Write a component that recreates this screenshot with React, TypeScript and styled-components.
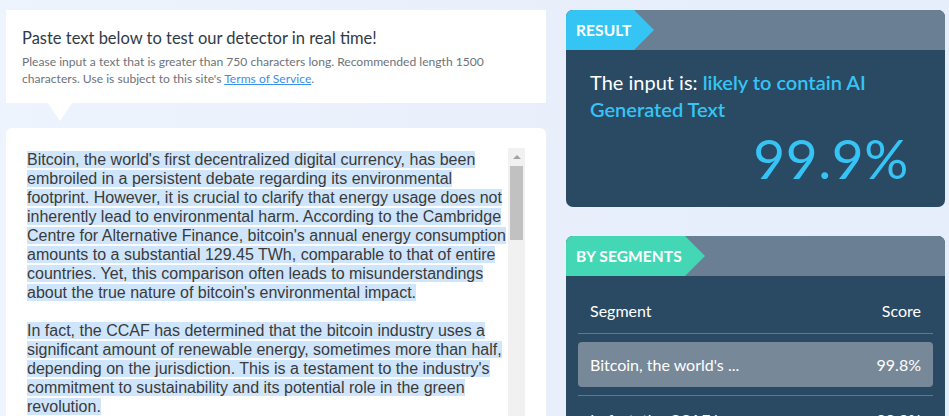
import React from "react";
import styled, { createGlobalStyle } from "styled-components";

const Global = createGlobalStyle`
  html, body { margin: 0; padding: 0; }
  body {
    width: 949px;
    height: 416px;
    overflow: hidden;
    background: linear-gradient(90deg, #eef4fd 0%, #e8effb 60%, #e6eefb 100%);
    font-family: Lato, "Noto Sans", sans-serif;
  }
`;

const Page = styled.div`
  display: grid;
  grid-template-columns: 540px 379px;
  column-gap: 20px;
  padding: 10px 4px 0 6px;
`;

const LeftCol = styled.div`
  display: flex;
  flex-direction: column;
`;

const InfoCard = styled.div`
  position: relative;
  background: #fff;
  height: 93px;
  box-sizing: border-box;
  padding: 18px 50px 0 16px;
  &::after {
    content: "";
    position: absolute;
    left: 42px;
    top: 93px;
    border-left: 12.5px solid transparent;
    border-right: 12.5px solid transparent;
    border-top: 18px solid #fff;
  }
`;

const Title = styled.h1`
  margin: 0 0 5px 0;
  font-size: 16.5px;
  font-weight: 400;
  color: #2f3b47;
  line-height: 20px;
  white-space: nowrap;
`;

const Desc = styled.p`
  margin: 0;
  font-size: 12.1px;
  line-height: 17px;
  color: #6d737a;
`;

const Link = styled.a`
  color: #3a8ef0;
  text-decoration: underline;
`;

const TextCard = styled.div`
  margin-top: 25px;
  background: #fff;
  border-radius: 6px 6px 0 0;
  height: 300px;
  padding: 20px 21px 0 21px;
  display: flex;
  align-items: flex-start;
`;

const TextBox = styled.div`
  width: 481px;
  height: 280px;
  overflow: hidden;
  padding-top: 2px;
  font-family: "Liberation Sans", Arial, sans-serif;
  font-size: 16px;
  line-height: 19px;
  color: #3a3a3a;
`;

const Para = styled.p`
  margin: 0 0 19px 0;
`;

const Sel = styled.span`
  background: #cfe5fb;
`;

const ScrollTrack = styled.div`
  width: 17px;
  height: 280px;
  background: #f1f1f1;
  display: flex;
  flex-direction: column;
  align-items: center;
`;

const ScrollArrow = styled.div`
  width: 17px;
  height: 17px;
  display: flex;
  align-items: center;
  justify-content: center;
  &::before {
    content: "";
    border-left: 4px solid transparent;
    border-right: 4px solid transparent;
    border-bottom: 4px solid #a3a3a3;
  }
`;

const ScrollThumb = styled.div`
  width: 13px;
  height: 74px;
  margin-top: 1px;
  background: #c1c1c1;
`;

const RightCol = styled.div`
  display: flex;
  flex-direction: column;
  gap: 29px;
`;

const Panel = styled.section`
  background: #2a4a63;
  border-radius: 7px;
  overflow: hidden;
`;

const PanelHead = styled.div`
  height: 40px;
  background: #6a7f93;
  display: flex;
`;

const Tag = styled.div<{ $color: string; $w: number }>`
  width: ${(p) => p.$w}px;
  height: 40px;
  background: ${(p) => p.$color};
  clip-path: polygon(0 0, calc(100% - 20px) 0, 100% 50%, calc(100% - 20px) 100%, 0 100%);
  color: #fff;
  font-weight: 700;
  font-size: 15.5px;
  line-height: 40px;
  padding-left: 10px;
  box-sizing: border-box;
  letter-spacing: 0.1px;
`;

const ResultBody = styled.div`
  height: 157px;
  box-sizing: border-box;
  padding: 19px 24px 0 24px;
  display: flex;
  flex-direction: column;
`;

const Verdict = styled.div`
  font-size: 20px;
  line-height: 27px;
  color: #fff;
`;

const Accent = styled.span`
  color: #35c4f5;
  font-weight: 600;
`;

const Score = styled.div`
  align-self: flex-end;
  margin-right: 12px;
  margin-top: 3px;
  font-size: 55px;
  line-height: 64px;
  color: #35c4f5;
  letter-spacing: 0.6px;
`;

const SegBody = styled.div`
  padding: 0 12px;
  height: 160px;
`;

const HeadRow = styled.div`
  display: flex;
  justify-content: space-between;
  padding: 25px 12px 12px 12px;
  line-height: 20px;
  font-size: 16px;
  color: #fff;
  border-bottom: 1px solid #5d7890;
`;

const RowWrap = styled.div`
  padding: 8px 0;
  border-bottom: 1px solid #5d7890;
`;

const Row = styled.div<{ $active?: boolean }>`
  display: flex;
  justify-content: space-between;
  height: ${(p) => (p.$active ? "45px" : "30px")};
  align-items: center;
  padding: 0 12px;
  border-radius: 4px;
  background: ${(p) => (p.$active ? "#778898" : "transparent")};
  color: #fff;
  font-size: 16px;
`;

export default function App() {
  return (
    <>
      <Global />
      <Page>
        <LeftCol>
          <InfoCard>
            <Title>Paste text below to test our detector in real time!</Title>
            <Desc>
              Please input a text that is greater than 750 characters long. Recommended length 1500
              characters. Use is subject to this site's <Link href="#">Terms of Service</Link>.
            </Desc>
          </InfoCard>
          <TextCard>
            <TextBox>
              <Para>
                <Sel>
                  Bitcoin, the world's first decentralized digital currency, has been embroiled in a
                  persistent debate regarding its environmental footprint. However, it is crucial to
                  clarify that energy usage does not inherently lead to environmental harm. According
                  to the Cambridge Centre for Alternative Finance, bitcoin's annual energy consumption
                  amounts to a substantial 129.45 TWh, comparable to that of entire countries. Yet,
                  this comparison often leads to misunderstandings about the true nature of bitcoin's
                  environmental impact.
                </Sel>
              </Para>
              <Para>
                <Sel>
                  In fact, the CCAF has determined that the bitcoin industry uses a significant amount
                  of renewable energy, sometimes more than half, depending on the jurisdiction. This is
                  a testament to the industry's commitment to sustainability and its potential role in
                  the green revolution.
                </Sel>
              </Para>
            </TextBox>
            <ScrollTrack>
              <ScrollArrow />
              <ScrollThumb />
            </ScrollTrack>
          </TextCard>
        </LeftCol>
        <RightCol>
          <Panel>
            <PanelHead>
              <Tag $color="#35c5f5" $w={88}>RESULT</Tag>
            </PanelHead>
            <ResultBody>
              <Verdict>
                The input is: <Accent>likely to contain AI Generated Text</Accent>
              </Verdict>
              <Score>99.9%</Score>
            </ResultBody>
          </Panel>
          <Panel>
            <PanelHead>
              <Tag $color="#44d7b6" $w={139}>BY SEGMENTS</Tag>
            </PanelHead>
            <SegBody>
              <HeadRow>
                <span>Segment</span>
                <span>Score</span>
              </HeadRow>
              <RowWrap>
                <Row $active>
                  <span>Bitcoin, the world's ...</span>
                  <span>99.8%</span>
                </Row>
              </RowWrap>
              <RowWrap>
                <Row>
                  <span>In fact, the CCAF h...</span>
                  <span>99.9%</span>
                </Row>
              </RowWrap>
            </SegBody>
          </Panel>
        </RightCol>
      </Page>
    </>
  );
}
